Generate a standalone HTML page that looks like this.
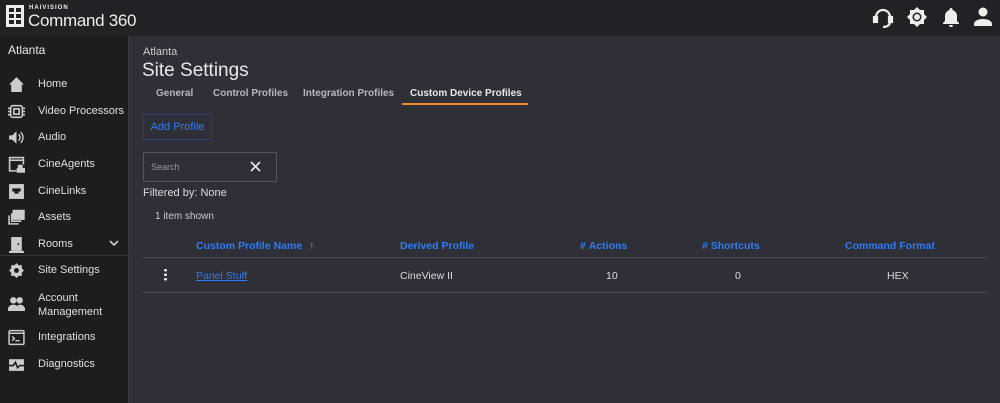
<!DOCTYPE html>
<html><head><meta charset="utf-8"><style>
*{box-sizing:border-box;margin:0;padding:0}
body{width:1000px;height:403px;overflow:hidden;background:#2e2f37;font-family:"Liberation Sans",sans-serif;color:#ddd;position:relative}
.top{position:absolute;left:0;top:0;width:1000px;height:36px;background:#212126}
.side{position:absolute;left:0;top:36px;width:129px;height:367px;background:#1d1d20;border-right:1px solid #3a3a40}
.nav{position:absolute;left:0;width:129px;font-size:11px;color:#e0e0e0}
.nav .t{position:absolute;left:38px;top:2px}
.ic{position:absolute;left:8px;width:17px;height:17px}
.abs{position:absolute}
.blue{color:#2f7cf6}
</style></head><body>
<div class="top">
  <svg class="abs" style="left:6px;top:5px" width="18" height="22" viewBox="0 0 18 22"><rect x="0" y="0" width="18" height="22" fill="#eee"/><rect x="3" y="3" width="5" height="4" fill="#212126"/><rect x="10" y="3" width="5" height="4" fill="#212126"/><rect x="3" y="9" width="5" height="4" fill="#212126"/><rect x="10" y="9" width="5" height="4" fill="#212126"/><rect x="3" y="15" width="5" height="4" fill="#212126"/><rect x="10" y="15" width="5" height="4" fill="#212126"/></svg>
  <div class="abs" style="left:29px;top:5px;font-size:6px;font-weight:bold;letter-spacing:1px;color:#eee">HAIVISION</div>
  <div class="abs" style="left:28px;top:11px;font-size:17px;color:#eee;letter-spacing:-0.3px">Command 360</div>
  <svg class="abs" style="left:872px;top:7px" width="22" height="22" viewBox="0 0 22 22" fill="none" stroke="#eee" stroke-width="2.2"><path d="M4 13V10a7 7 0 0 1 14 0v3"/><rect x="2" y="10" width="3" height="5" fill="#eee"/><rect x="17" y="10" width="3" height="5" fill="#eee"/><path d="M18 15c0 3-3 5-7 5"/></svg>
  <svg class="abs" style="left:906px;top:6px" width="22" height="22" viewBox="0 0 22 22"><path d="M11 1l3 3h4v4l3 3-3 3v4h-4l-3 3-3-3H4v-4l-3-3 3-3V4h4z" fill="#eee"/><circle cx="11" cy="11" r="4.5" fill="#212126"/><circle cx="11" cy="11" r="3" fill="#eee"/></svg>
  <svg class="abs" style="left:942px;top:6px" width="18" height="22" viewBox="0 0 18 22"><path d="M9 2a1.5 1.5 0 0 1 1.5 1.5v.5a6 6 0 0 1 4.5 6v5l2 2v1H1v-1l2-2v-5a6 6 0 0 1 4.5-6v-.5A1.5 1.5 0 0 1 9 2z" fill="#eee"/><path d="M7 19h4a2 2 0 0 1-4 0z" fill="#eee"/></svg>
  <svg class="abs" style="left:974px;top:7px" width="18" height="20" viewBox="0 0 18 20" fill="#eee"><circle cx="9" cy="5" r="4.5"/><path d="M0 19v-2c0-3 4-5 9-5s9 2 9 5v2z"/></svg>
</div>
<div class="side">
  <div class="abs" style="left:8px;top:7px;font-size:12px;color:#e8e8e8">Atlanta</div>
  <div class="nav" style="top:40px">
    <svg class="ic" viewBox="0 0 16 16" fill="#ccc"><path d="M8 1L1 8h2v7h10V8h2z"/></svg><div class="t">Home</div>
  </div>
  <div class="nav" style="top:67px">
    <svg class="ic" viewBox="0 0 16 16" fill="none" stroke="#ccc" stroke-width="1.5"><rect x="2.5" y="2.5" width="11" height="11" rx="2"/><rect x="5.5" y="5.5" width="5" height="5"/><path d="M0 5h2M0 8h2M0 11h2M14 5h2M14 8h2M14 11h2"/></svg><div class="t">Video Processors</div>
  </div>
  <div class="nav" style="top:93px">
    <svg class="ic" viewBox="0 0 16 16" fill="#ccc"><path d="M1 6h3l4-4v12l-4-4H1z"/><path d="M10 5a4 4 0 0 1 0 6M12 3a7 7 0 0 1 0 10" stroke="#ccc" fill="none" stroke-width="1.3"/></svg><div class="t">Audio</div>
  </div>
  <div class="nav" style="top:120px">
    <svg class="ic" viewBox="0 0 16 16" fill="none" stroke="#ccc" stroke-width="1.5"><path d="M9 14H1.5V1.5h13V8"/><path d="M1.5 4h13"/><rect x="10" y="9" width="3" height="3" fill="#ccc"/><rect x="13" y="12" width="3" height="3" fill="#ccc"/><rect x="9" y="12" width="3" height="3" fill="#ccc"/></svg><div class="t">CineAgents</div>
  </div>
  <div class="nav" style="top:147px">
    <svg class="ic" viewBox="0 0 16 16"><rect x="1" y="1" width="14" height="14" fill="#ccc"/><path d="M4 5h8v3h-2v2H6V8H4z" fill="#1d1d20"/></svg><div class="t">CineLinks</div>
  </div>
  <div class="nav" style="top:173px">
    <svg class="ic" viewBox="0 0 16 16" fill="none" stroke="#ccc" stroke-width="1.5"><rect x="5" y="1.5" width="10" height="8" fill="#ccc"/><path d="M3.5 4v7.5h9M1 6v8h9"/></svg><div class="t">Assets</div>
  </div>
  <div class="nav" style="top:200px">
    <svg class="ic" viewBox="0 0 16 16"><rect x="3" y="1" width="10" height="13" fill="#ccc"/><rect x="1" y="14" width="14" height="2" fill="#ccc"/><rect x="9" y="7" width="1.5" height="1.5" fill="#1d1d20"/></svg><div class="t">Rooms</div>
    <svg class="abs" style="left:109px;top:4px" width="10" height="7" viewBox="0 0 10 7" fill="none" stroke="#ccc" stroke-width="1.6"><path d="M1 1l4 4 4-4"/></svg>
  </div>
  <div class="abs" style="left:0;top:219px;width:129px;height:1px;background:#333338"></div>
  <div class="nav" style="top:226px">
    <svg class="ic" viewBox="0 0 16 16"><path d="M8 1l2 2h3v3l2 2-2 2v3h-3l-2 2-2-2H3v-3L1 8l2-2V3h3z" fill="#ccc"/><circle cx="8" cy="8" r="2.3" fill="#1d1d20"/></svg><div class="t">Site Settings</div>
  </div>
  <div class="nav" style="top:253px">
    <svg class="ic" style="top:6px" viewBox="0 0 16 16" fill="#ccc"><circle cx="5" cy="5" r="3"/><circle cx="11" cy="5" r="3"/><path d="M0 15v-2c0-2 2-4 5-4s5 2 5 4v2zM10 15v-2c0-1-.5-2-1.2-3 .7-.5 1.5-1 2.2-1 3 0 5 2 5 4v2z"/></svg><div class="t" style="line-height:14px">Account<br>Management</div>
  </div>
  <div class="nav" style="top:293px">
    <svg class="ic" viewBox="0 0 16 16" fill="none" stroke="#ccc" stroke-width="1.4"><rect x="1" y="1.5" width="14" height="13" rx="1"/><path d="M1 4h14M4 7l2 2-2 2M7 11h4"/></svg><div class="t">Integrations</div>
  </div>
  <div class="nav" style="top:320px">
    <svg class="ic" viewBox="0 0 16 16"><rect x="1" y="3" width="14" height="11" fill="#ccc"/><path d="M1 9h4l2-3 2 5 2-2h4" stroke="#1d1d20" stroke-width="1.5" fill="none"/></svg><div class="t">Diagnostics</div>
  </div>
</div>

<div class="abs" style="left:143px;top:46px;font-size:11px;color:#ccc">Atlanta</div>
<div class="abs" style="left:142px;top:60px;font-size:19px;color:#e8e8e8">Site Settings</div>
<div class="abs" style="left:156px;top:88px;font-size:10px;font-weight:bold;color:#b8b8bc">General</div>
<div class="abs" style="left:213px;top:88px;font-size:10px;font-weight:bold;color:#b8b8bc">Control Profiles</div>
<div class="abs" style="left:303px;top:88px;font-size:10px;font-weight:bold;color:#b8b8bc">Integration Profiles</div>
<div class="abs" style="left:410px;top:88px;font-size:10px;font-weight:bold;color:#e8e8e8">Custom Device Profiles</div>
<div class="abs" style="left:402px;top:103px;width:126px;height:2px;background:#f08a2c"></div>
<div class="abs blue" style="left:143px;top:114px;width:69px;height:26px;border:1px solid #2a4370;border-radius:2px;font-size:11px;line-height:24px;text-align:center">Add Profile</div>
<div class="abs" style="left:143px;top:152px;width:134px;height:30px;border:1px solid #55565e;border-radius:2px"></div>
<div class="abs" style="left:151px;top:162px;font-size:9px;color:#999">Search</div>
<svg class="abs" style="left:250px;top:161px" width="11" height="11" viewBox="0 0 11 11" stroke="#eee" stroke-width="1.6"><path d="M1 1l9 9M10 1l-9 9"/></svg>
<div class="abs" style="left:143px;top:187px;font-size:11px;color:#ddd">Filtered by: None</div>
<div class="abs" style="left:155px;top:211px;font-size:10px;color:#ccc">1 item shown</div>
<div class="abs blue" style="left:196px;top:240px;font-size:10.5px;font-weight:bold">Custom Profile Name <span style="color:#999;font-weight:normal;margin-left:4px">↑</span></div>
<div class="abs blue" style="left:400px;top:240px;font-size:10.5px;font-weight:bold">Derived Profile</div>
<div class="abs blue" style="left:580px;top:240px;font-size:10.5px;font-weight:bold">#&nbsp;Actions</div>
<div class="abs blue" style="left:702px;top:240px;font-size:10.5px;font-weight:bold"># Shortcuts</div>
<div class="abs blue" style="left:845px;top:240px;font-size:10.5px;font-weight:bold">Command Format</div>
<div class="abs" style="left:143px;top:257px;width:845px;height:1px;background:#48494f"></div>
<div class="abs" style="left:164px;top:268px;width:3px;height:13px;background:radial-gradient(circle,#eee 1.3px,transparent 1.5px) 0 0/3px 4.5px"></div>
<div class="abs blue" style="left:196px;top:270px;font-size:10.5px;text-decoration:underline">Panel Stuff</div>
<div class="abs" style="left:400px;top:270px;font-size:10.5px;color:#ddd">CineView II</div>
<div class="abs" style="left:606px;top:270px;font-size:10.5px;color:#ddd">10</div>
<div class="abs" style="left:735px;top:270px;font-size:10.5px;color:#ddd">0</div>
<div class="abs" style="left:887px;top:270px;font-size:10.5px;color:#ddd">HEX</div>
<div class="abs" style="left:143px;top:292px;width:845px;height:1px;background:#48494f"></div>
</body></html>
